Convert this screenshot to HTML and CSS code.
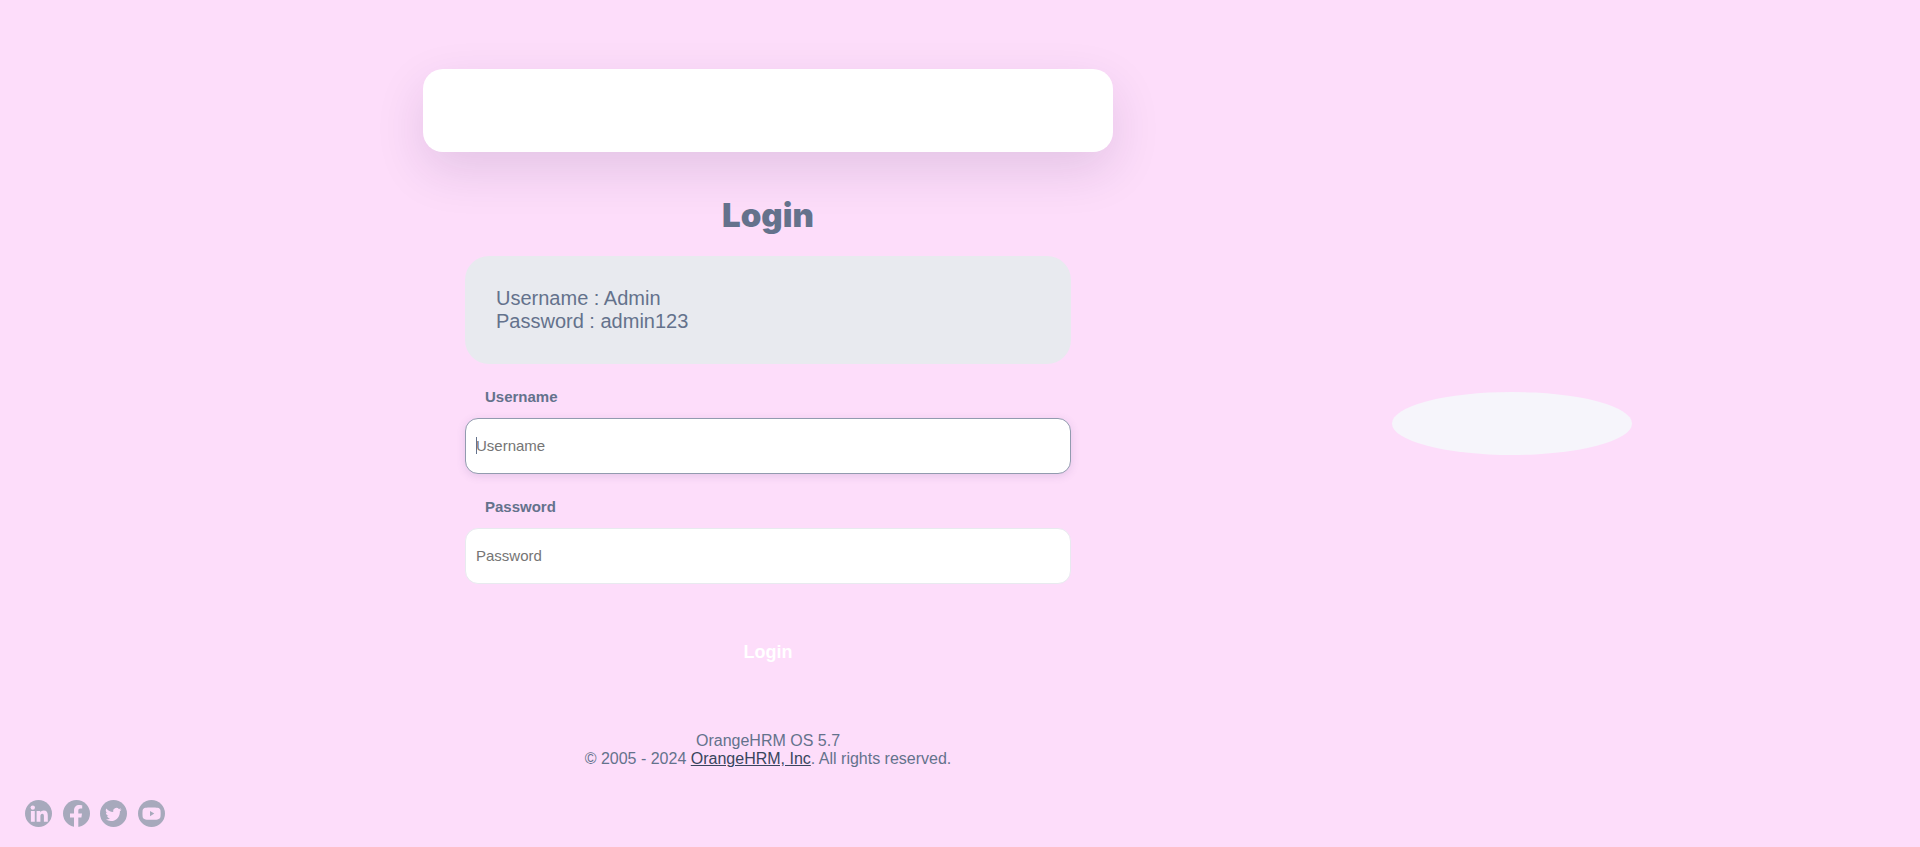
FILE: index.html
```html
<!DOCTYPE html>
<html lang="en">
<head>
<meta charset="utf-8">
<meta name="viewport" content="width=device-width, initial-scale=1">
<title>OrangeHRM</title>
<link rel="stylesheet" href="styles.css">
</head>
<body>
<div class="page">
  <nav class="social" aria-label="Social media">
    <a href="#" aria-label="LinkedIn"><svg viewBox="0 0 27 27"><circle class="disc" cx="13.5" cy="13.5" r="13.5"/><circle class="mark" cx="7.8" cy="7.600" r="2.200"/><path class="mark" d="M5.900 10.900h3.900v10.900H5.900zM11.600 10.900h3.700v1.500c.7-1.100 1.900-1.800 3.400-1.800 3 0 4.100 1.900 4.100 5v6.200h-3.900v-5.600c0-1.500-.3-2.400-1.600-2.400s-1.900 1-1.900 2.300v5.700h-3.800z"/></svg></a>
    <a href="#" aria-label="Facebook"><svg viewBox="0 0 27 27"><circle class="disc" cx="13.5" cy="13.5" r="13.5"/><path class="mark" d="M11 27v-9.400H7V13.600h4v-3.100c0-3.700 2.100-5.600 5.300-5.600 1.400 0 2.900.3 2.900.3v3.400h-1.700c-1.700 0-2.200 1-2.200 2.100v2.900h3.700l-.6 4h-3.100V27z"/></svg></a>
    <a href="#" aria-label="Twitter"><svg viewBox="0 0 27 27"><circle class="disc" cx="13.5" cy="13.5" r="13.5"/><path class="mark" d="M21.500 9.500c-.6.300-1.200.500-1.900.5.700-.4 1.200-1 1.400-1.800-.6.400-1.300.600-2.100.8a3.300 3.300 0 0 0-5.700 3c-2.700-.1-5.200-1.500-6.800-3.500a3.300 3.300 0 0 0 1 4.500c-.5 0-1-.2-1.500-.4 0 1.600 1.200 3 2.700 3.300-.5.100-1 .1-1.500 0 .4 1.400 1.600 2.300 3.100 2.300A6.700 6.700 0 0 1 5.900 19.600a9.500 9.500 0 0 0 4.900 1.500c6.200 0 9.300-5.100 9.100-9.900.6-.4 1.200-1 1.600-1.700z"/></svg></a>
    <a href="#" aria-label="YouTube"><svg viewBox="0 0 27 27"><circle class="disc" cx="13.5" cy="13.5" r="13.5"/><path class="mark" fill-rule="evenodd" d="M7.500 7.800c2-.4 10-.4 12 0 1.900.3 2.800 1.200 3 2.800.2 2 .2 4 0 6-.2 1.800-1.300 2.600-3 2.900-3 .4-9 .4-12 0-1.800-.2-2.700-1.200-2.900-2.900-.2-2-.2-4 0-6 .2-1.600 1.200-2.500 2.900-2.800zM12 11v5.200l4.300-2.600z"/></svg></a>
  </nav>

  <main class="login">
    <div class="banner"></div>
    <div class="content">
      <h1 class="title">Login</h1>
      <div class="hint">
        <p>Username : Admin</p>
        <p>Password : admin123</p>
      </div>
      <form class="form">
        <div class="field">
          <label for="username">Username</label>
          <div class="control">
            <input class="active" id="username" name="username" type="text" placeholder="Username">
            <span class="caret"></span>
          </div>
        </div>
        <div class="field">
          <label for="password">Password</label>
          <div class="control">
            <input id="password" name="password" type="password" placeholder="Password">
          </div>
        </div>
        <button type="submit">Login</button>
      </form>
      <footer class="copyright">
        <p>OrangeHRM OS 5.7</p>
        <p>© 2005 - 2024 <a href="#">OrangeHRM, Inc</a>. All rights reserved.</p>
      </footer>
    </div>
  </main>

  <aside class="brand"><div class="ellipse"></div></aside>
</div>
</body>
</html>
```
FILE: styles.css
```css
* {
  box-sizing: border-box;
}

body {
  margin: 0;
  background: #fdddfa;
  color: #64728c;
  font-family: "Liberation Sans", Arial, sans-serif;
  font-size: 16px;
  line-height: 18px;
}

p {
  margin: 0;
}

.page {
  display: grid;
  grid-template-columns: 423fr 690fr 807fr;
  min-height: 100vh;
}

.social {
  display: flex;
  align-self: end;
  justify-content: space-between;
  max-width: 165px;
  padding: 0 0 20px 25px;
}

.social a,
.social svg {
  display: block;
  width: 27px;
  height: 27px;
}

.disc {
  fill: #a7a9bc;
}

.mark {
  fill: #fdddfa;
}

.login {
  padding-top: 69px;
}

.banner {
  height: 83px;
  border-radius: 20px;
  background: #fff;
  box-shadow: 0 18px 50px rgba(40, 20, 80, 0.12);
}

.content {
  padding: 0 42px;
}

.title {
  margin: 43px 0 21px;
  font-family: "Arial Black", Inter, sans-serif;
  font-size: 33px;
  font-weight: 900;
  line-height: 40px;
  text-align: center;
}

.hint {
  padding: 31px;
  border-radius: 24px;
  background: #e8eaef;
  font-size: 20px;
  line-height: 23px;
}

.field {
  margin-top: 24px;
}

.field label {
  display: block;
  margin: 0 0 12px 20px;
  font-size: 15px;
  font-weight: 700;
}

.control {
  position: relative;
}

.control input {
  display: block;
  width: 100%;
  height: 56px;
  padding: 0 10px 2px;
  border: 1px solid #e8eaef;
  border-radius: 13px;
  outline: none;
  background: #fff;
  color: #64728c;
  font: inherit;
  font-size: 15px;
}

.control input::placeholder {
  color: #757575;
}

.control input.active {
  border-color: #929baf;
  box-shadow: 0 2px 8px rgba(100, 80, 140, 0.16);
}

.caret {
  position: absolute;
  top: 19px;
  left: 11px;
  width: 1px;
  height: 17px;
  background: #64728c;
}

.form button {
  display: block;
  width: 100%;
  height: 56px;
  margin-top: 40px;
  border: 0;
  border-radius: 24px;
  background: transparent;
  color: #fff;
  font: inherit;
  font-size: 18px;
  font-weight: 700;
}

.copyright {
  margin-top: 52px;
  text-align: center;
}

.copyright a {
  color: #38455d;
}

.brand {
  display: flex;
  align-items: center;
  justify-content: center;
  padding-right: 9px;
}

.ellipse {
  width: 240px;
  height: 63px;
  border-radius: 50%;
  background: #f6f5fb;
}
```
